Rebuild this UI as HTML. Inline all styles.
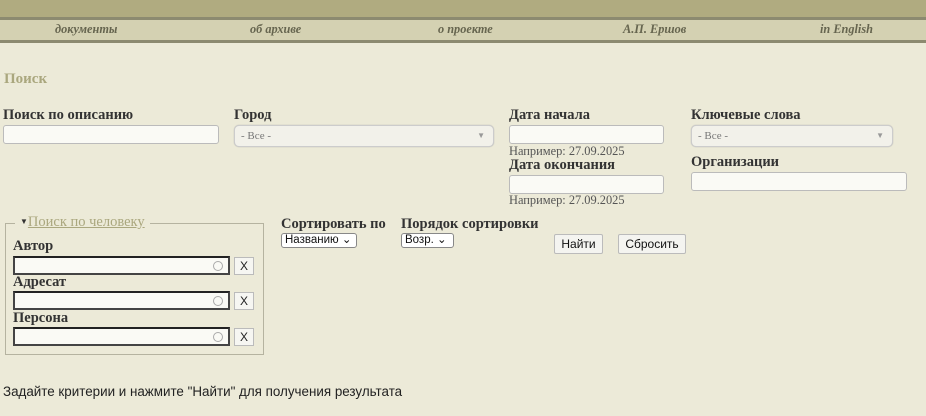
<!DOCTYPE html>
<html><head><meta charset="utf-8"><style>
*{box-sizing:border-box;margin:0;padding:0}
body{width:926px;height:416px;background:#ecead8;font-family:"Liberation Serif","Noto Serif CJK SC",serif;color:#222;position:relative;overflow:hidden}
.a{position:absolute}
.top{left:0;top:0;width:926px;height:17px;background:#b0ab80}
.l1{left:0;top:17px;width:926px;height:3px;background:#8c8a70}
.nav{left:0;top:20px;width:926px;height:20px;background:#d4d1b2}
.l2{left:0;top:40px;width:926px;height:3px;background:#8c8a70}
.nav span{position:absolute;top:2px;font-style:italic;font-weight:bold;font-size:12.3px;color:#66654f}
.lbl{font-weight:bold;font-size:14.5px;color:#333}
.inp{background:#fafaf5;border:1px solid #bbb;border-radius:3px}
.sel{background:#f2f1ea;border:1px solid #ccc;border-radius:5px;font-size:11px;color:#777;padding:4px 6px;box-shadow:0 0 1px #aaa}
.sel i{position:absolute;right:8px;top:5px;font-style:normal;font-size:8px;color:#999}
.hint{font-size:12.4px;color:#555}
.pin{background:#fafaf5;border:2px solid #444;border-top-color:#222}
.pin b{position:absolute;right:5px;top:3px;width:10px;height:10px;border:1px solid #aaa;border-radius:50%}
.x{width:20px;height:18px;border:1px solid #bbb;background:#f6f6f2;font-family:"Liberation Sans",sans-serif;font-size:12px;text-align:center;line-height:16px;color:#222}
.ns{font-family:"Liberation Sans",sans-serif;font-size:11.5px;background:#fff;border:1px solid #888;border-radius:3px;padding:0 3px;height:15px;line-height:13px;color:#111}
.btn{font-family:"Liberation Sans",sans-serif;font-size:12px;background:#f4f4f0;border:1px solid #bbb;border-radius:2px;height:20px;line-height:18px;text-align:center;color:#111}
</style></head><body>
<div class="a top"></div><div class="a l1"></div><div class="a nav"><span style="left:55px">документы</span><span style="left:250px">об архиве</span><span style="left:438px">о проекте</span><span style="left:623px">А.П. Ершов</span><span style="left:820px">in English</span></div><div class="a l2"></div>
<div class="a" style="left:4px;top:71px;font-weight:bold;font-size:15px;color:#aaa77e">Поиск</div>
<div class="a lbl" style="left:3px;top:107px">Поиск по описанию</div>
<div class="a inp" style="left:3px;top:125px;width:216px;height:19px"></div>
<div class="a lbl" style="left:234px;top:107px">Город</div>
<div class="a sel" style="left:234px;top:125px;width:260px;height:22px">- Все -<i>▼</i></div>
<div class="a lbl" style="left:509px;top:107px">Дата начала</div>
<div class="a inp" style="left:509px;top:125px;width:155px;height:19px"></div>
<div class="a hint" style="left:509px;top:144px">Например: 27.09.2025</div>
<div class="a lbl" style="left:509px;top:157px">Дата окончания</div>
<div class="a inp" style="left:509px;top:175px;width:155px;height:19px"></div>
<div class="a hint" style="left:509px;top:193px">Например: 27.09.2025</div>
<div class="a lbl" style="left:691px;top:107px">Ключевые слова</div>
<div class="a sel" style="left:691px;top:125px;width:202px;height:22px">- Все -<i>▼</i></div>
<div class="a lbl" style="left:691px;top:154px">Организации</div>
<div class="a inp" style="left:691px;top:172px;width:216px;height:19px"></div>
<div class="a" style="left:5px;top:223px;width:259px;height:132px;border:1px solid #b5b3a0"></div>
<div class="a" style="left:15px;top:214px;background:#ecead8;padding:0 5px;font-size:14.5px;color:#aaa77e"><span style="font-size:8px;color:#333;vertical-align:2px">▼</span><u>Поиск по человеку</u></div>
<div class="a lbl" style="left:13px;top:238px">Автор</div>
<div class="a pin" style="left:13px;top:256px;width:217px;height:19px"><b></b></div>
<div class="a x" style="left:234px;top:257px">X</div>
<div class="a lbl" style="left:13px;top:274px">Адресат</div>
<div class="a pin" style="left:13px;top:291px;width:217px;height:19px"><b></b></div>
<div class="a x" style="left:234px;top:292px">X</div>
<div class="a lbl" style="left:13px;top:310px">Персона</div>
<div class="a pin" style="left:13px;top:327px;width:217px;height:19px"><b></b></div>
<div class="a x" style="left:234px;top:328px">X</div>
<div class="a lbl" style="left:281px;top:216px">Сортировать по</div>
<div class="a ns" style="left:281px;top:233px;width:76px">Названию ⌄</div>
<div class="a lbl" style="left:401px;top:216px">Порядок сортировки</div>
<div class="a ns" style="left:401px;top:233px;width:53px">Возр. ⌄</div>
<div class="a btn" style="left:554px;top:234px;width:49px">Найти</div>
<div class="a btn" style="left:618px;top:234px;width:68px">Сбросить</div>
<div class="a" style="left:3px;top:384px;font-family:'Liberation Sans',sans-serif;font-size:13.4px;color:#222">Задайте критерии и нажмите "Найти" для получения результата</div>
</body></html>
